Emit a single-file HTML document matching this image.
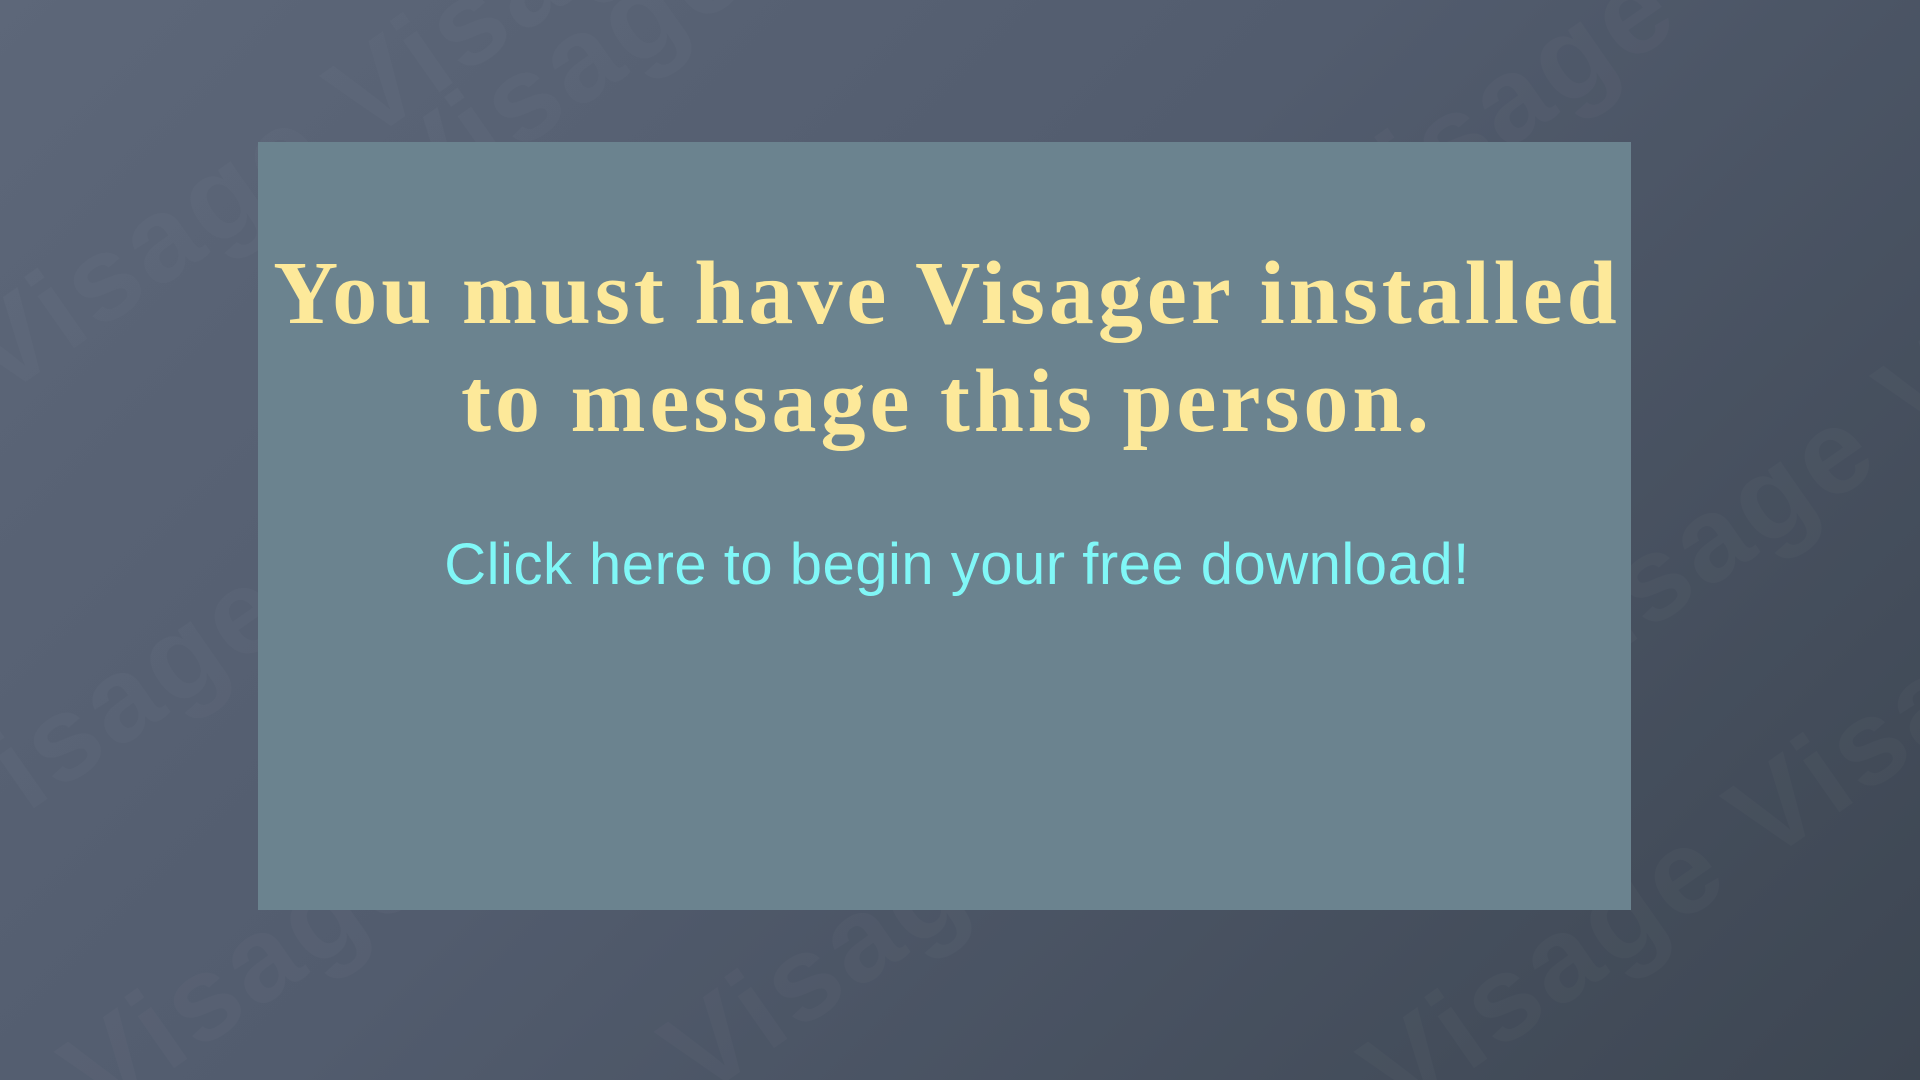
<!DOCTYPE html>
<html><head><meta charset="utf-8"><style>
html,body{margin:0;padding:0;width:1920px;height:1080px;overflow:hidden}
.root{position:absolute;left:0;top:0;width:1920px;height:1080px;overflow:hidden;background:linear-gradient(135deg,#5d6779 0%,#525c6e 45%,#3d4652 100%);font-family:"Liberation Sans",sans-serif}
svg{position:absolute;left:0;top:0}
.panel{position:absolute;left:258px;top:142px;width:1373px;height:768px;background:#6b838f}
h1{position:absolute;left:-26px;right:0;top:240px;margin:0;text-align:center;font-family:"Liberation Serif",serif;font-weight:bold;font-size:90px;line-height:108px;color:#fde99a;letter-spacing:4px}
.link{position:absolute;left:-6px;right:0;top:530px;text-align:center;font-size:58px;color:#80f7f7;line-height:70px;letter-spacing:0.5px}
</style></head><body><div class="root">
<svg width="1920" height="1080" viewBox="0 0 1920 1080">
<g font-family="Liberation Sans, sans-serif" font-weight="bold" font-size="120" fill="rgba(255,255,255,0.025)" letter-spacing="4">
<text transform="translate(0,400) rotate(-35)">Visage Visage</text>
<text transform="translate(-40,860) rotate(-35)">Visage Visage</text>
<text transform="translate(420,220) rotate(-35)">Visage Visage</text>
<text transform="translate(1350,260) rotate(-35)">Visage Visage</text>
<text transform="translate(1550,700) rotate(-35)">Visage Visage</text>
<text transform="translate(700,1100) rotate(-35)">Visage Visage</text>
<text transform="translate(1400,1120) rotate(-35)">Visage Visage</text>
<text transform="translate(100,1120) rotate(-35)">Visage Visage</text>
</g></svg>
<div class="panel"></div>
<h1>You must have Visager installed<br>to message this person.</h1>
<div class="link">Click here to begin your free download!</div>
</div></body></html>
